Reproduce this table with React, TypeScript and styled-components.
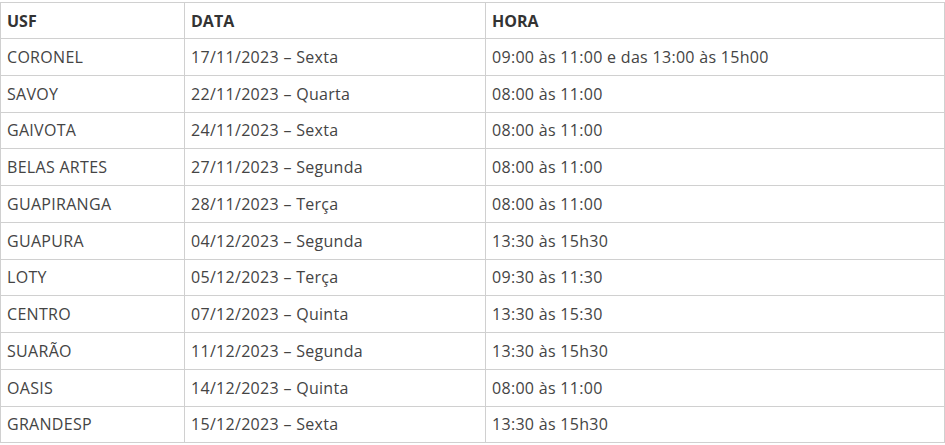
import React from 'react';
import styled, { createGlobalStyle } from 'styled-components';

interface Visit {
  usf: string;
  data: string;
  hora: string;
}

const visits: Visit[] = [
  { usf: 'CORONEL', data: '17/11/2023 – Sexta', hora: '09:00 às 11:00 e das 13:00 às 15h00' },
  { usf: 'SAVOY', data: '22/11/2023 – Quarta', hora: '08:00 às 11:00' },
  { usf: 'GAIVOTA', data: '24/11/2023 – Sexta', hora: '08:00 às 11:00' },
  { usf: 'BELAS ARTES', data: '27/11/2023 – Segunda', hora: '08:00 às 11:00' },
  { usf: 'GUAPIRANGA', data: '28/11/2023 – Terça', hora: '08:00 às 11:00' },
  { usf: 'GUAPURA', data: '04/12/2023 – Segunda', hora: '13:30 às 15h30' },
  { usf: 'LOTY', data: '05/12/2023 – Terça', hora: '09:30 às 11:30' },
  { usf: 'CENTRO', data: '07/12/2023 – Quinta', hora: '13:30 às 15:30' },
  { usf: 'SUARÃO', data: '11/12/2023 – Segunda', hora: '13:30 às 15h30' },
  { usf: 'OASIS', data: '14/12/2023 – Quinta', hora: '08:00 às 11:00' },
  { usf: 'GRANDESP', data: '15/12/2023 – Sexta', hora: '13:30 às 15h30' },
];

const GlobalStyle = createGlobalStyle`
  html, body {
    margin: 0;
    padding: 0;
    background: #fff;
  }
  body {
    font-family: "Open Sans", "Noto Sans", sans-serif;
    color: #333;
  }
`;

const Wrapper = styled.div`
  padding-top: 2px;
  width: 945px;
`;

const Table = styled.table`
  border-collapse: collapse;
  table-layout: fixed;
  width: 944px;
  font-size: 16px;
`;

const Col = styled.col<{ $w: number }>`
  width: ${(p) => p.$w}px;
`;

const HeadCell = styled.th`
  border: 1px solid #d0d0d0;
  height: 35px;
  padding: 0 6px;
  text-align: left;
  font-size: 16px;
  font-weight: 700;
  color: #333;
`;

const Cell = styled.td`
  border: 1px solid #d0d0d0;
  height: 35.75px;
  padding: 0 6px;
  text-align: left;
  vertical-align: middle;
  white-space: nowrap;
  color: #444;
  letter-spacing: 0.3px;
`;

const App: React.FC = () => (
  <>
    <GlobalStyle />
    <Wrapper>
      <Table>
        <colgroup>
          <Col $w={184} />
          <Col $w={301} />
          <Col $w={459} />
        </colgroup>
        <thead>
          <tr>
            <HeadCell>USF</HeadCell>
            <HeadCell>DATA</HeadCell>
            <HeadCell>HORA</HeadCell>
          </tr>
        </thead>
        <tbody>
          {visits.map((v) => (
            <tr key={v.usf}>
              <Cell>{v.usf}</Cell>
              <Cell>{v.data}</Cell>
              <Cell>{v.hora}</Cell>
            </tr>
          ))}
        </tbody>
      </Table>
    </Wrapper>
  </>
);

export default App;
